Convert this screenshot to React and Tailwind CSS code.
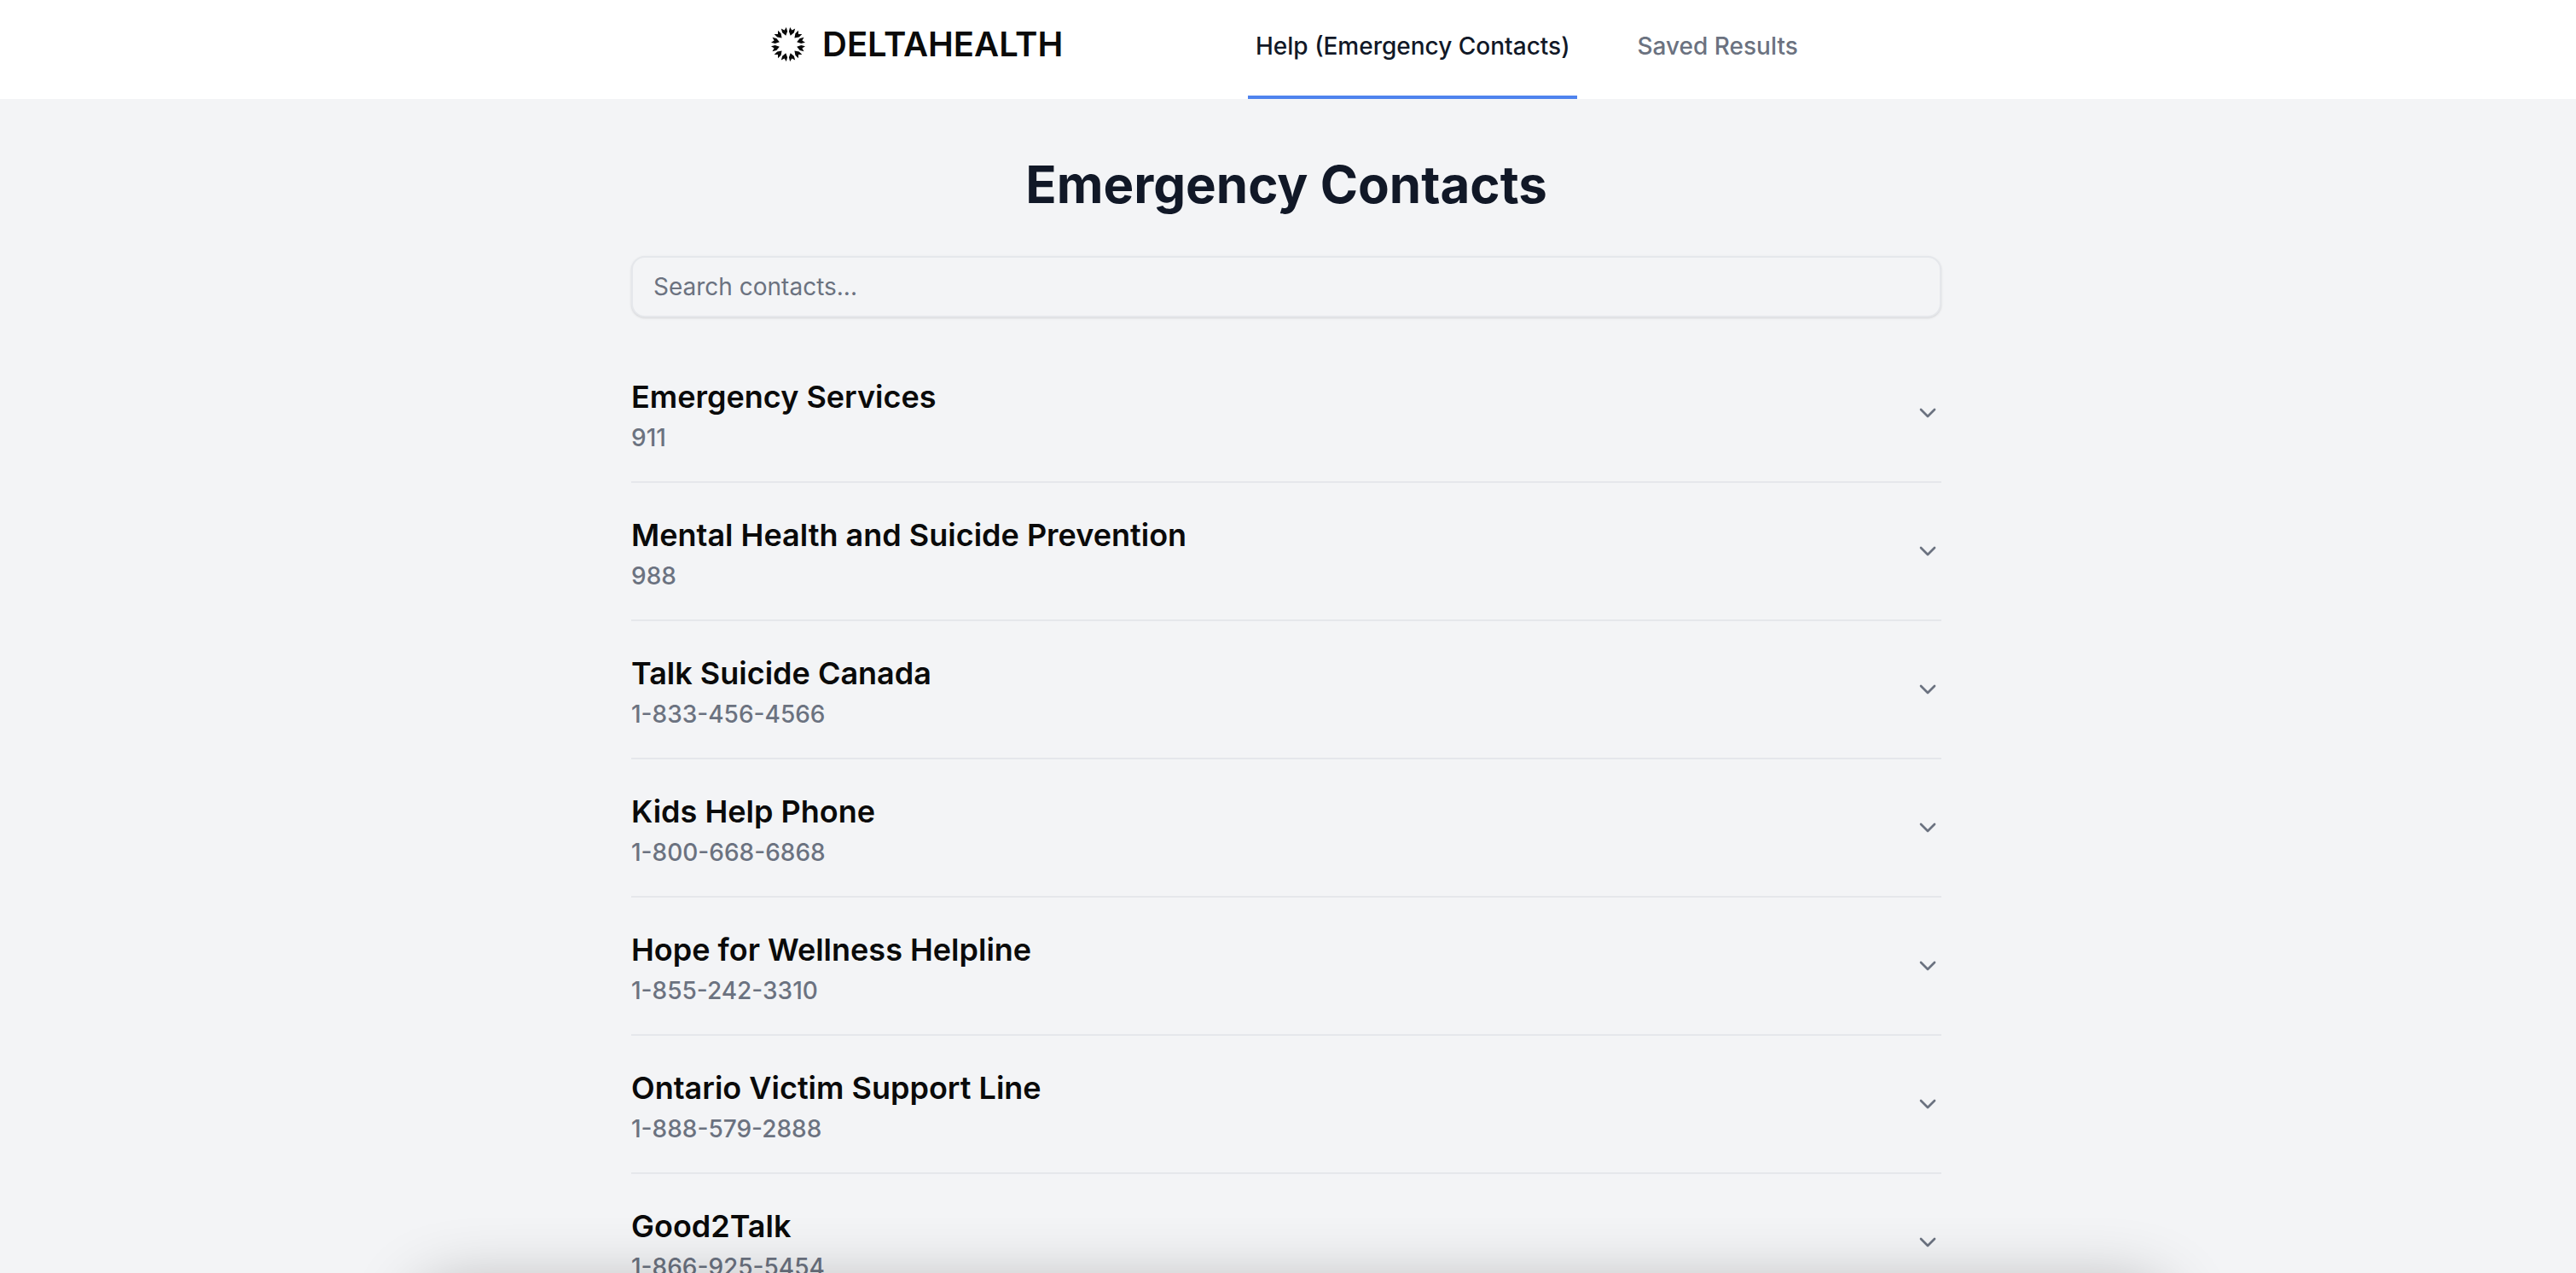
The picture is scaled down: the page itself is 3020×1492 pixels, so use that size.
import React from 'react';
import { ChevronDown } from 'lucide-react';

const contacts = [
  { name: 'Emergency Services', phone: '911' },
  { name: 'Mental Health and Suicide Prevention', phone: '988' },
  { name: 'Talk Suicide Canada', phone: '1-833-456-4566' },
  { name: 'Kids Help Phone', phone: '1-800-668-6868' },
  { name: 'Hope for Wellness Helpline', phone: '1-855-242-3310' },
  { name: 'Ontario Victim Support Line', phone: '1-888-579-2888' },
  { name: 'Good2Talk', phone: '1-866-925-5454' },
];

const Logo = () => (
  <svg width="40" height="40" viewBox="-20 -20 40 40" className="shrink-0">
    {Array.from({ length: 12 }).map((_, i) => (
      <path key={i} d="M-3.1 -20 L0 -17 L3.1 -20 L3.1 -15 L0 -10.5 L-3.1 -15 Z" fill="#0a0a0a" transform={`rotate(${i * 30 + 15})`} />
    ))}
  </svg>
);

const ContactRow = ({ name, phone }) => (
  <div className="h-[162px] shrink-0 border-b-2 border-[#e5e7eb] flex items-center justify-between">
    <div className="pt-[4px]">
      <div className="text-[36px] leading-[52px] font-semibold text-[#0a0a0a]">{name}</div>
      <div className="mt-[2px] text-[28px] leading-[40px] font-medium text-[#6b7280]">{phone}</div>
    </div>
    <ChevronDown size={32} className="text-[#6b7280]" />
  </div>
);

export default function App() {
  return (
    <div className="h-screen overflow-hidden bg-[#f3f4f6] font-['Inter',sans-serif]">
      <header className="h-[116px] bg-white flex justify-center pr-[4px]">
        <div className="w-[1536px] flex pl-[164px]">
          <div className="flex items-center gap-[20px] w-[559px] pb-[12px]">
            <Logo />
            <span className="text-[40px] font-semibold text-[#0a0a0a]">DELTAHEALTH</span>
          </div>
          <nav className="flex gap-[70px]">
            <div className="h-full flex items-center px-[9px] pb-[4px] border-b-4 border-[#4f83ee] text-[28px] font-medium text-[#111827]">
              Help (Emergency Contacts)
            </div>
            <div className="h-full flex items-center text-[28px] font-medium text-[#6b7280] pb-[8px]">
              Saved Results
            </div>
          </nav>
        </div>
      </header>
      <main className="w-[1536px] ml-[740px] pt-[64px]">
        <h1 className="text-[60px] leading-[72px] font-bold text-[#111827] text-center">Emergency Contacts</h1>
        <input
          placeholder="Search contacts..."
          className="block w-full h-[72px] mt-[48px] px-[24px] text-[28px] rounded-[16px] border-2 border-[#e5e7eb] bg-[#f3f4f6] shadow-sm placeholder:text-[#6b7280] outline-none"
        />
        <div className="mt-[32px] flex flex-col">
          {contacts.map((c) => (
            <ContactRow key={c.name} {...c} />
          ))}
        </div>
      </main>
      <div className="fixed left-[490px] right-[480px] top-[1510px] h-[100px] rounded-t-[40px] bg-white shadow-[0_0_80px_rgba(0,0,0,0.3)]" />
    </div>
  );
}
